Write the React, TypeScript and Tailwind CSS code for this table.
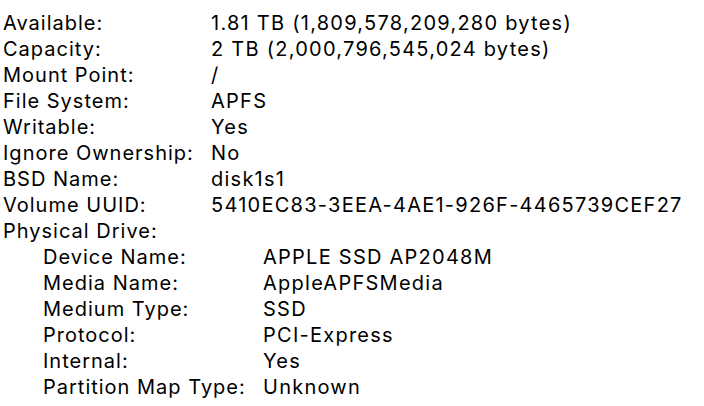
const rows: [string, string][] = [
  ['Available:', '1.81 TB (1,809,578,209,280 bytes)'],
  ['Capacity:', '2 TB (2,000,796,545,024 bytes)'],
  ['Mount Point:', '/'],
  ['File System:', 'APFS'],
  ['Writable:', 'Yes'],
  ['Ignore Ownership:', 'No'],
  ['BSD Name:', 'disk1s1'],
  ['Volume UUID:', '5410EC83-3EEA-4AE1-926F-4465739CEF27'],
];

const drive: [string, string][] = [
  ['Device Name:', 'APPLE SSD AP2048M'],
  ['Media Name:', 'AppleAPFSMedia'],
  ['Medium Type:', 'SSD'],
  ['Protocol:', 'PCI-Express'],
  ['Internal:', 'Yes'],
  ['Partition Map Type:', 'Unknown'],
];

function Row({ label, value, indent }: { label: string; value: string; indent?: boolean }) {
  return (
    <div className={`flex ${indent ? 'pl-[40px]' : ''}`}>
      <span className={indent ? 'w-[220px] shrink-0 whitespace-nowrap' : 'w-[208px] shrink-0 whitespace-nowrap'}>
        {label}
      </span>
      <span className="whitespace-nowrap tracking-[1.25px]">{value}</span>
    </div>
  );
}

export default function App() {
  return (
    <div className="h-[406px] w-[704px] overflow-hidden bg-white pl-[3px] pt-[10px] font-['Inter',sans-serif] text-[20px] leading-[26px] tracking-[1px] text-black">
      {rows.map(([l, v]) => (
        <Row key={l} label={l} value={v} />
      ))}
      <div>Physical Drive:</div>
      {drive.map(([l, v]) => (
        <Row key={l} label={l} value={v} indent />
      ))}
    </div>
  );
}
